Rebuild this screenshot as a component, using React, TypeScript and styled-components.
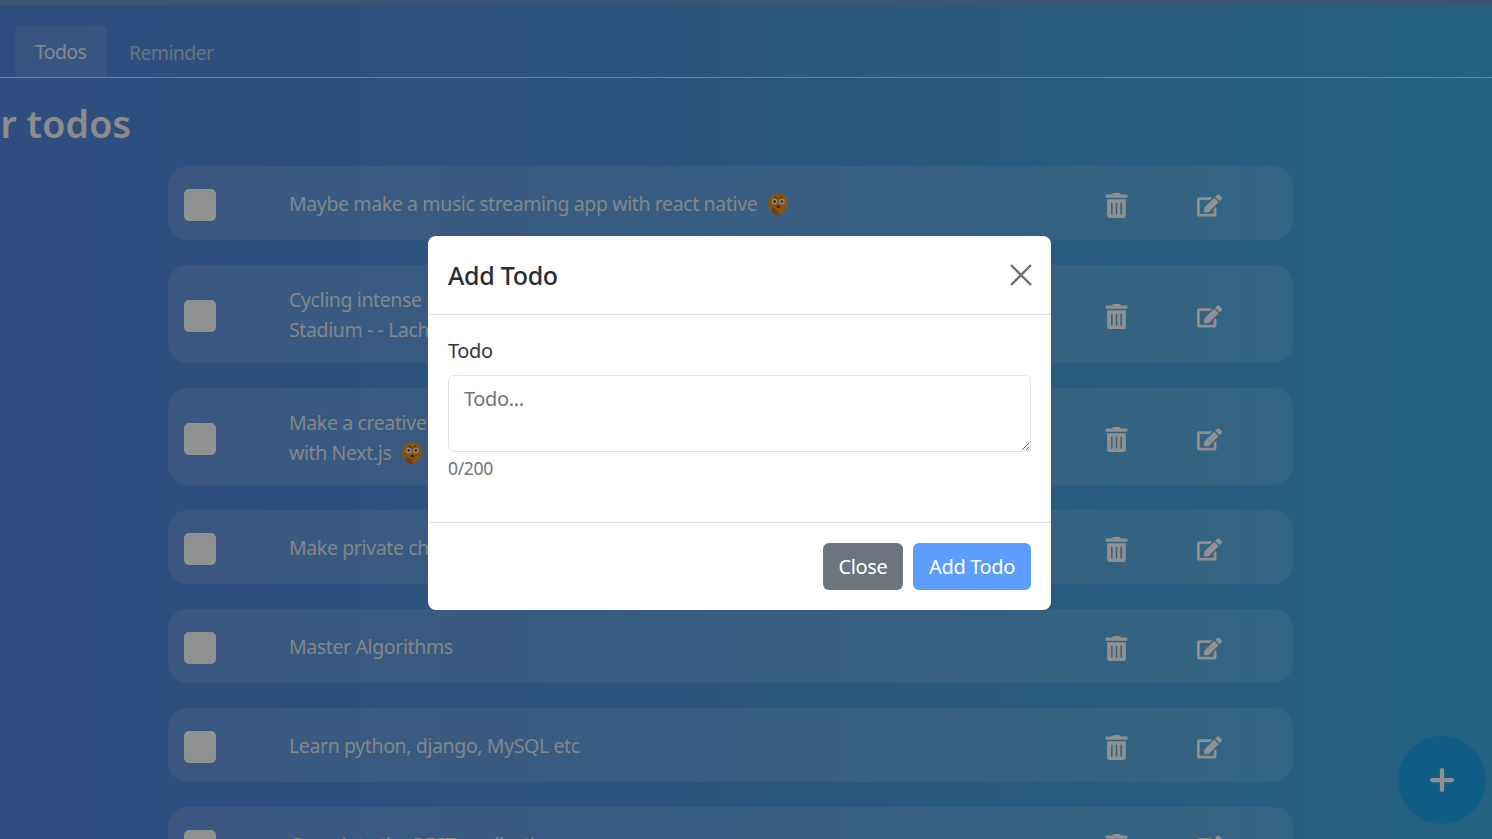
import React from 'react';
import styled, { createGlobalStyle } from 'styled-components';
import { FaEdit, FaTrashAlt } from 'react-icons/fa';
import { LuPlus } from 'react-icons/lu';

const GlobalStyle = createGlobalStyle`
  html, body {
    margin: 0;
    height: 100%;
    overflow: hidden;
  }
  body {
    font-family: 'Noto Sans', 'Liberation Sans', sans-serif;
    font-size: 20px;
    line-height: 30px;
    letter-spacing: -0.35px;
  }
  * {
    box-sizing: border-box;
  }
`;

const Page = styled('div')`
  position: relative;
  height: 839px;
  overflow: hidden;
  background: linear-gradient(90deg, #4d82d5 0%, #4a8fd2 50%, #3fa3d8 100%);
`;

const TopBar = styled('div')`
  height: 5px;
  background: #5f8fc4;
`;

const TabBar = styled('div')`
  display: flex;
  height: 73px;
  padding: 21px 0 0 15px;
  border-bottom: 1px solid #c9d6e6;
`;

const Tab = styled('div')<{ $active?: boolean }>`
  display: flex;
  align-items: center;
  min-width: 92px;
  height: 51px;
  padding: ${(p) => (p.$active ? '0' : '2px')} 20px 0;
  margin-right: 2px;
  border-radius: 6px 6px 0 0;
  font-size: 19.5px;
  letter-spacing: -0.65px;
  color: ${(p) => (p.$active ? '#dfe3e8' : '#a9bfd8')};
  background: ${(p) => (p.$active ? 'rgba(255, 255, 255, 0.09)' : 'transparent')};
`;

const Heading = styled('h1')`
  margin: 21px 0 17px -68px;
  font-size: 37.5px;
  line-height: 50px;
  font-weight: 600;
  letter-spacing: 0.2px;
  color: #eaeaea;
`;

const TodoList = styled('div')`
  display: flex;
  flex-direction: column;
  gap: 25px;
  width: 1125px;
  margin-left: 168px;
`;

const TodoRow = styled('div')`
  display: grid;
  grid-template-columns: 32px 1fr auto;
  align-items: center;
  min-height: 73.75px;
  padding: 20px 71px 17.75px 16px;
  border-radius: 20px;
  background: rgba(255, 255, 255, 0.11);
`;

const CheckBox = styled('div')`
  width: 32px;
  height: 32px;
  margin-top: 2px;
  border-radius: 5px;
  background: #f2f2f2;
`;

const TodoText = styled('div')`
  padding-left: 73px;
  font-size: 19.5px;
  letter-spacing: -0.38px;
  color: #dcdfe2;
`;

const Actions = styled('div')`
  display: flex;
  align-items: center;
  gap: 68px;
  margin-top: 3px;
  color: #f0f0f0;
  font-size: 25px;
`;

const ActionIcon = styled('div')`
  display: flex;
  justify-content: center;
  width: 25px;
`;

const Fab = styled('div')`
  position: absolute;
  right: 6px;
  top: 736px;
  display: flex;
  align-items: center;
  justify-content: center;
  width: 88px;
  height: 88px;
  border-radius: 50%;
  background: #1c9ce0;
  color: #f0f0f0;
  font-size: 34px;
`;

const Backdrop = styled('div')`
  position: absolute;
  inset: 0;
  background: rgba(0, 0, 0, 0.4);
`;

const Modal = styled('div')`
  position: absolute;
  left: 428px;
  top: 236px;
  width: 623px;
  height: 374px;
  display: flex;
  flex-direction: column;
  border-radius: 8px;
  background: #ffffff;
  color: #212529;
`;

const ModalHeader = styled('div')`
  display: flex;
  align-items: center;
  justify-content: space-between;
  height: 79px;
  padding: 0 19px 0 20px;
  border-bottom: 1px solid #dee2e6;
`;

const ModalTitle = styled('div')`
  font-size: 25px;
  font-weight: 500;
  line-height: 36px;
  letter-spacing: -0.3px;
  color: #2a2e32;
`;

const CloseIcon = styled('svg')`
  width: 22px;
  height: 22px;
  stroke: #6f7275;
  stroke-width: 2.4;
`;

const ModalBody = styled('div')`
  display: flex;
  flex-direction: column;
  height: 208px;
  padding: 21px 20px 0;
  border-bottom: 1px solid #dee2e6;
`;

const FieldLabel = styled('label')`
  margin-bottom: 9px;
  color: #33373b;
`;

const TodoInput = styled('textarea')`
  display: block;
  width: 583px;
  height: 77px;
  padding: 8px 15px;
  border: 1px solid #dee2e6;
  border-radius: 6px;
  outline: none;
  font: inherit;
  letter-spacing: inherit;
  color: #212529;
  &::placeholder {
    color: #6c757d;
  }
`;

const Counter = styled('div')`
  margin-top: 1px;
  font-size: 17.5px;
  line-height: 30px;
  color: #6c757d;
`;

const ModalFooter = styled('div')`
  display: flex;
  justify-content: flex-end;
  gap: 10px;
  padding: 20px 20px 0;
`;

const Button = styled('button')<{ $primary?: boolean }>`
  height: 47px;
  width: ${(p) => (p.$primary ? '118px' : '80px')};
  padding: 0;
  border: none;
  border-radius: 6px;
  font: inherit;
  letter-spacing: inherit;
  color: #ffffff;
  background: ${(p) => (p.$primary ? '#5c9dff' : '#6c757d')};
`;

const EmojiMark = styled('svg')`
  display: inline-block;
  width: 23px;
  height: 24px;
  margin-left: 9px;
  vertical-align: -5px;
`;

function Emoji() {
  return (
    <EmojiMark viewBox="0 0 24 24">
      <path d="M11 1c6-1 12 3 12 10 0 3-1 6-3 8-2 3-5 4-9 4-2 0-4-2-5-4-2-1-4-3-4-7C2 6 6 2 11 1z" fill="#e08a1e" />
      <path d="M6 16c3 0 6 3 8 7-2 1-5 0-7-2-1-2-1-3-1-5z" fill="#c26a12" />
      <circle cx="9" cy="9.5" r="3" fill="#e6e2d8" />
      <circle cx="16.5" cy="9.5" r="3" fill="#e6e2d8" />
      <circle cx="9" cy="9.5" r="1.3" fill="#3a2a20" />
      <circle cx="16.5" cy="9.5" r="1.3" fill="#3a2a20" />
      <path d="M9 4.5l3 1.5M17 4.5l-3 1.5" stroke="#6a3c12" strokeWidth="1" />
      <ellipse cx="13" cy="15" rx="2" ry="1.2" fill="#5a2d10" />
    </EmojiMark>
  );
}

type Todo = {
  id: number;
  lines: string[];
  emoji?: boolean;
};

const todos: Todo[] = [
  { id: 1, lines: ['Maybe make a music streaming app with react native'], emoji: true },
  { id: 2, lines: ['Cycling intense', 'Stadium - - Lach'] },
  { id: 3, lines: ['Make a creative', 'with Next.js'], emoji: true },
  { id: 4, lines: ['Make private ch'] },
  { id: 5, lines: ['Master Algorithms'] },
  { id: 6, lines: ['Learn python, django, MySQL etc'] },
  { id: 7, lines: ['Complete the REST application'] },
];

export default function App() {
  return (
    <Page>
      <GlobalStyle />
      <TopBar />
      <TabBar>
        <Tab $active>Todos</Tab>
        <Tab>Reminder</Tab>
      </TabBar>
      <Heading>Your todos</Heading>
      <TodoList>
        {todos.map((todo) => (
          <TodoRow key={todo.id}>
            <CheckBox />
            <TodoText>
              {todo.lines.map((line, i) => (
                <div key={line}>
                  {line}
                  {todo.emoji && i === todo.lines.length - 1 && <Emoji />}
                </div>
              ))}
            </TodoText>
            <Actions>
              <ActionIcon>
                <FaTrashAlt />
              </ActionIcon>
              <ActionIcon>
                <FaEdit />
              </ActionIcon>
            </Actions>
          </TodoRow>
        ))}
      </TodoList>
      <Fab>
        <LuPlus strokeWidth={3} />
      </Fab>
      <Backdrop />
      <Modal>
        <ModalHeader>
          <ModalTitle>Add Todo</ModalTitle>
          <CloseIcon viewBox="0 0 22 22">
            <path d="M1 1l20 20M21 1L1 21" />
          </CloseIcon>
        </ModalHeader>
        <ModalBody>
          <FieldLabel>Todo</FieldLabel>
          <TodoInput placeholder="Todo..." />
          <Counter>0/200</Counter>
        </ModalBody>
        <ModalFooter>
          <Button>Close</Button>
          <Button $primary>Add Todo</Button>
        </ModalFooter>
      </Modal>
    </Page>
  );
}
